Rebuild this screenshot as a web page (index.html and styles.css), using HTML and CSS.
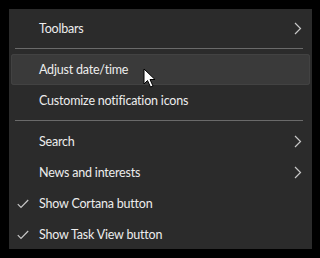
FILE: index.html
```html
<!DOCTYPE html>
<html lang="en">
<head>
  <meta charset="UTF-8">
  <title>Taskbar menu</title>
  <link rel="stylesheet" href="styles.css">
</head>
<body>
  <div class="menu">
    <div class="item">
      <span class="check"></span>
      <span class="label">Toolbars</span>
      <svg class="arrow" width="8" height="13" viewBox="0 0 8 13"><path d="M1 1 L6.5 6.5 L1 12" fill="none" stroke="#c8c8c8" stroke-width="1.2"/></svg>
    </div>
    <div class="sep"></div>
    <div class="item hover">
      <span class="check"></span>
      <span class="label">Adjust date/time</span>
    </div>
    <div class="item">
      <span class="check"></span>
      <span class="label">Customize notification icons</span>
    </div>
    <div class="sep"></div>
    <div class="item">
      <span class="check"></span>
      <span class="label">Search</span>
      <svg class="arrow" width="8" height="13" viewBox="0 0 8 13"><path d="M1 1 L6.5 6.5 L1 12" fill="none" stroke="#c8c8c8" stroke-width="1.2"/></svg>
    </div>
    <div class="item">
      <span class="check"></span>
      <span class="label">News and interests</span>
      <svg class="arrow" width="8" height="13" viewBox="0 0 8 13"><path d="M1 1 L6.5 6.5 L1 12" fill="none" stroke="#c8c8c8" stroke-width="1.2"/></svg>
    </div>
    <div class="item">
      <span class="check"><svg width="12" height="10" viewBox="0 0 12 10"><path d="M0.8 5.2 L4 8.5 L11.2 1" fill="none" stroke="#c8c8c8" stroke-width="1.2"/></svg></span>
      <span class="label">Show Cortana button</span>
    </div>
    <div class="item">
      <span class="check"><svg width="12" height="10" viewBox="0 0 12 10"><path d="M0.8 5.2 L4 8.5 L11.2 1" fill="none" stroke="#c8c8c8" stroke-width="1.2"/></svg></span>
      <span class="label">Show Task View button</span>
    </div>

    <!-- mouse pointer over the hovered row -->
    <svg class="cursor" width="14" height="21" viewBox="0 0 14 21">
      <path d="M1 1 L1 16 L4.5 12.5 L7.5 19 L10 18 L7 11.5 L12 11.5 Z" fill="#fff" stroke="#000" stroke-width="1"/>
    </svg>
  </div>
</body>
</html>
```

FILE: styles.css
```css
* {
    margin: 0;
    padding: 0;
    box-sizing: border-box;
}

body {
    background-color: #000;
    width: 320px;
    height: 258px;
    padding: 9px 8px 9px 9px;
    font-family: Lato, "Noto Sans", sans-serif;
    overflow: hidden;
}

.menu {
    position: relative;
    width: 303px;
    height: 240px;
    background-color: #2b2b2b;
    padding-top: 4px;
}

.item {
    display: flex;
    align-items: center;
    height: 31px;
    margin: 0 2px 0 2px;
    border-radius: 3px;
    color: #ededed;
    font-size: 12.5px;
    letter-spacing: -0.2px;
}

.item.hover {
    background-color: #3a3a3a;
    box-shadow: inset 0 0 0 1px #424242;
}

.check {
    width: 28px;
    display: flex;
    justify-content: flex-end;
    padding-right: 10px;
}

.check svg {
    display: block;
}

.label {
    flex: 1;
}

.arrow {
    margin-right: 8px;
}

.sep {
    height: 1px;
    margin: 4px 9px 5px 6px;
    background-color: #6a6a6a;
}

.cursor {
    position: absolute;
    left: 134px;
    top: 59px;
}
```
